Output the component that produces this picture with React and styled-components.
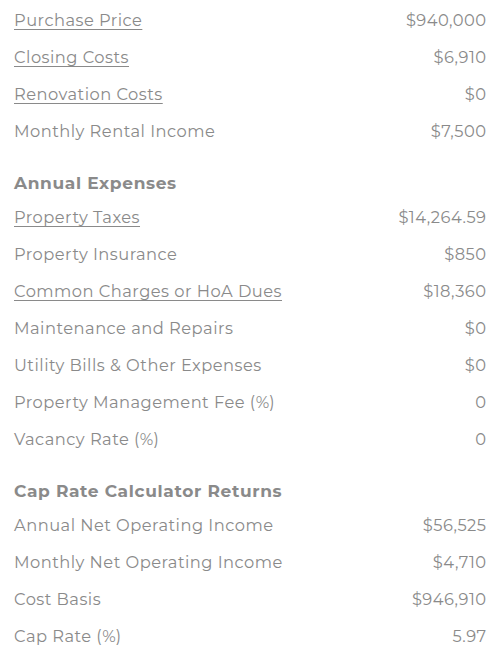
import React from 'react';
import styled, { createGlobalStyle } from 'styled-components';

const GlobalStyle = createGlobalStyle`
  body {
    margin: 0;
    background: #ffffff;
    font-family: "Montserrat", "Open Sans", "Noto Sans", sans-serif;
  }
`;

const Wrapper = styled.div`
  width: 500px;
  padding: 1.5px 14px 0 14px;
  box-sizing: border-box;
  color: #8a8a8a;
`;

const Row = styled.div`
  display: flex;
  justify-content: space-between;
  align-items: center;
  height: 37px;
  font-size: 16.3px;
  letter-spacing: 0.48px;
`;

const Label = styled.span`
  text-decoration: ${(p) => (p.$link ? 'underline' : 'none')};
  text-underline-offset: 3px;
  cursor: ${(p) => (p.$link ? 'pointer' : 'default')};
`;

const Value = styled.span`
  text-align: right;
  margin-right: -0.5px;
`;

const Heading = styled.h3`
  margin: 0;
  padding: 22px 0 4px 0;
  line-height: 23px;
  font-size: 17px;
  letter-spacing: 0.65px;
  font-weight: 700;
  color: #8a8a8a;
`;

const purchase = [
  { label: 'Purchase Price', value: '$940,000', link: true },
  { label: 'Closing Costs', value: '$6,910', link: true },
  { label: 'Renovation Costs', value: '$0', link: true },
  { label: 'Monthly Rental Income', value: '$7,500' },
];

const expenses = [
  { label: 'Property Taxes', value: '$14,264.59', link: true },
  { label: 'Property Insurance', value: '$850' },
  { label: 'Common Charges or HoA Dues', value: '$18,360', link: true },
  { label: 'Maintenance and Repairs', value: '$0' },
  { label: 'Utility Bills & Other Expenses', value: '$0' },
  { label: 'Property Management Fee (%)', value: '0' },
  { label: 'Vacancy Rate (%)', value: '0' },
];

const returns = [
  { label: 'Annual Net Operating Income', value: '$56,525' },
  { label: 'Monthly Net Operating Income', value: '$4,710' },
  { label: 'Cost Basis', value: '$946,910' },
  { label: 'Cap Rate (%)', value: '5.97' },
];

function Rows({ items }) {
  return items.map((it) => (
    <Row key={it.label}>
      <Label $link={it.link}>{it.label}</Label>
      <Value>{it.value}</Value>
    </Row>
  ));
}

export default function App() {
  return (
    <Wrapper>
      <GlobalStyle />
      <Rows items={purchase} />
      <Heading>Annual Expenses</Heading>
      <Rows items={expenses} />
      <Heading>Cap Rate Calculator Returns</Heading>
      <Rows items={returns} />
    </Wrapper>
  );
}
